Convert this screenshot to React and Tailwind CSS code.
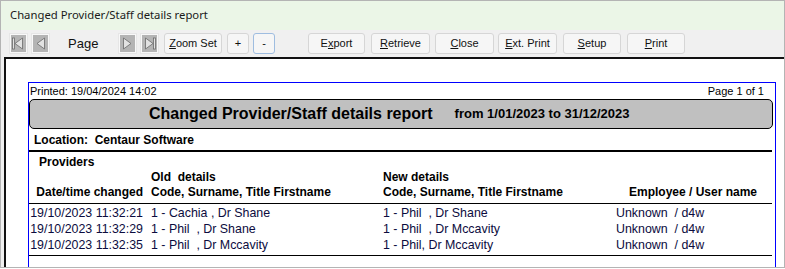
import React from "react";

const ui = { fontFamily: "'Liberation Sans', Arial, sans-serif" };

function NavBtn({ dir, bar }) {
  const tri = dir === "left" ? "M11.5 3 L4 8.5 L11.5 14 Z" : "M3.5 3 L11 8.5 L3.5 14 Z";
  const barX = dir === "left" ? 1.5 : 11.5;
  return (
    <div className="w-[19px] h-[21px] border border-[#e6e6e6] bg-[#f8f8f8] p-[1px] flex">
      <div className="flex-1 bg-[#b4b4b4] flex items-center justify-center">
        <svg width="15" height="17" viewBox="0 0 15 17">
          {bar && (
            <rect x={barX} y="3" width="2" height="11" fill="#e2e2e2" stroke="#6a6a6a" strokeWidth="0.8" />
          )}
          <path d={tri} fill="#e2e2e2" stroke="#6a6a6a" strokeWidth="0.8" />
        </svg>
      </div>
    </div>
  );
}

function Btn({ children, className = "", focus }) {
  return (
    <div
      className={`h-[21px] flex items-center justify-center rounded-[3px] border bg-[#f6f6f6] text-[11px] text-[#111] ${
        focus ? "border-[#9fbde0]" : "border-[#d6d6d6]"
      } ${className}`}
    >
      {children}
    </div>
  );
}

const rows = [
  ["19/10/2023 11:32:21", "1 - Cachia , Dr Shane", "1 - Phil  , Dr Shane", "Unknown  / d4w"],
  ["19/10/2023 11:32:29", "1 - Phil  , Dr Shane", "1 - Phil  , Dr Mccavity", "Unknown  / d4w"],
  ["19/10/2023 11:32:35", "1 - Phil  , Dr Mccavity", "1 - Phil, Dr Mccavity", "Unknown  / d4w"],
];

export default function App() {
  return (
    <div className="w-[785px] h-[268px] border border-[#b4b4b4] flex flex-col overflow-hidden bg-[#f0f0f0]" style={ui}>
      {/* title bar */}
      <div className="h-[29px] shrink-0 bg-[#ebf6e7] flex items-center pl-[9px] text-[11.3px] text-[#1a1a1a]" style={{ fontFamily: "'Noto Sans', sans-serif" }}>
        Changed Provider/Staff details report
      </div>

      {/* toolbar */}
      <div className="h-[27px] shrink-0 flex items-start pt-[3px]">
        <div className="ml-[8px]"><NavBtn dir="left" bar /></div>
        <div className="ml-[3px]"><NavBtn dir="left" /></div>
        <div className="w-[68px] pl-[18px] h-[21px] flex items-center text-[13px] text-[#111]">Page</div>
        <NavBtn dir="right" />
        <div className="ml-[3px]"><NavBtn dir="right" bar /></div>
        <Btn className="ml-[5px] w-[58px]"><span><u>Z</u>oom Set</span></Btn>
        <Btn className="ml-[5px] w-[22px]">+</Btn>
        <Btn className="ml-[4px] w-[22px]" focus>-</Btn>
        <Btn className="ml-[33px] w-[57px]"><span>E<u>x</u>port</span></Btn>
        <Btn className="ml-[6px] w-[59px]"><span><u>R</u>etrieve</span></Btn>
        <Btn className="ml-[5px] w-[59px]"><span><u>C</u>lose</span></Btn>
        <Btn className="ml-[4px] w-[59px]"><span><u>E</u>xt. Print</span></Btn>
        <Btn className="ml-[6px] w-[58px]"><span><u>S</u>etup</span></Btn>
        <Btn className="ml-[6px] w-[58px]"><span><u>P</u>rint</span></Btn>
      </div>

      {/* report viewer */}
      <div className="flex-1 ml-[3px] border-l-2 border-t-2 border-[#111] bg-white pl-[22px] pt-[23px] overflow-hidden">
        <div className="w-[748px] h-full border border-b-0 border-[#0000ff] text-black">
          <div className="h-[16px] flex justify-between items-center pl-[1px] pr-[11px] text-[11px] leading-[16px]">
            <span>Printed: 19/04/2024 14:02</span>
            <span>Page 1 of 1</span>
          </div>

          <div className="h-[30px] mr-[2px] bg-[#c0c0c0] border border-black rounded-[5px] flex items-center pl-[119px] font-bold">
            <span className="text-[16px]">Changed Provider/Staff details report</span>
            <span className="text-[13px] ml-[22px]">from 1/01/2023 to 31/12/2023</span>
          </div>

          <div className="h-[21px] flex items-center pl-[5px] text-[12px] font-bold">
            Location:&nbsp; Centaur Software
          </div>
          <div className="h-[2px] bg-black mr-[3px]" />

          <div className="pt-[3px] pb-[3px] text-[12px] font-bold leading-[15px]">
            <div className="pl-[10px]">Providers</div>
            <div className="flex">
              <div className="w-[122px]" />
              <div className="w-[232px]">Old&nbsp; details</div>
              <div>New details</div>
            </div>
            <div className="flex">
              <div className="w-[114px] text-right">Date/time changed</div>
              <div className="w-[8px]" />
              <div className="w-[232px]">Code, Surname, Title Firstname</div>
              <div className="w-[233px]">Code, Surname, Title Firstname</div>
              <div className="w-[154px] text-center">Employee / User name</div>
            </div>
          </div>
          <div className="h-px bg-black mr-[3px]" />

          <div className="pt-[1px] text-[12.4px] leading-[16px] text-[#0c0c3e]">
            {rows.map((r, i) => (
              <div key={i} className="flex h-[16px] whitespace-pre">
                <div className="w-[114px] text-right">{r[0]}</div>
                <div className="w-[8px]" />
                <div className="w-[232px]">{r[1]}</div>
                <div className="w-[233px]">{r[2]}</div>
                <div>{r[3]}</div>
              </div>
            ))}
          </div>
          <div className="h-px bg-black mr-[3px] mt-[2px]" />
        </div>
      </div>
    </div>
  );
}
